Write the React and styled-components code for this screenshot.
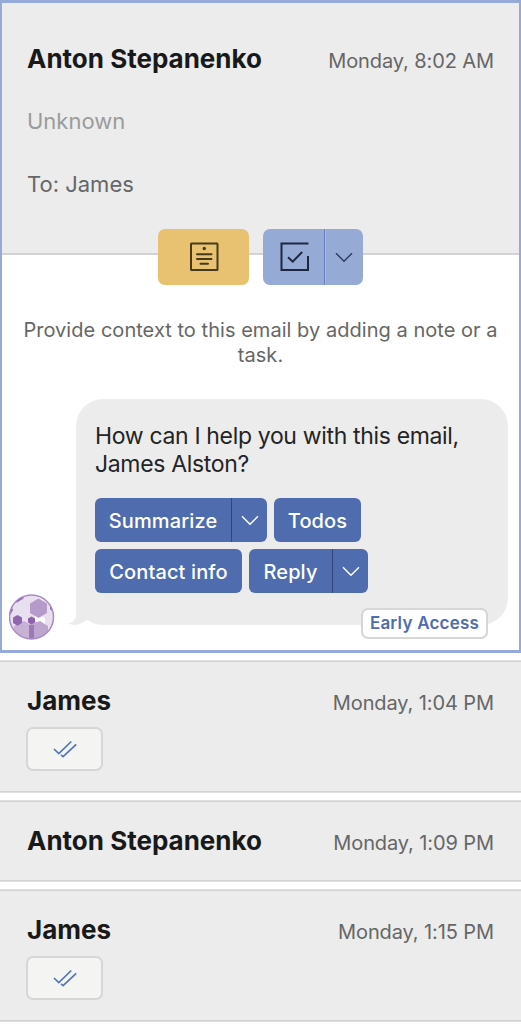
import styled, { createGlobalStyle, css } from 'styled-components';

const messages = [
  { id: 1, name: 'James', date: 'Monday, 1:04 PM', read: true },
  { id: 2, name: 'Anton Stepanenko', date: 'Monday, 1:09 PM', read: false },
  { id: 3, name: 'James', date: 'Monday, 1:15 PM', read: true },
];

export default function App() {
  return (
    <>
      <GlobalStyle />
      <Thread>
        <OpenEmail>
          <EmailHeader>
            <TitleRow>
              <Name>Anton Stepanenko</Name>
              <DateText>Monday, 8:02 AM</DateText>
            </TitleRow>
            <Meta $color='#9b9b9b'>Unknown</Meta>
            <Meta $color='#666666'>To: James</Meta>
          </EmailHeader>
          <Actions>
            <NoteButton aria-label='Add note'>
              <NoteIcon />
            </NoteButton>
            <TaskButton>
              <TaskMain aria-label='Add task'>
                <TaskIcon />
              </TaskMain>
              <TaskToggle aria-label='More task options'>
                <Chevron color='#2b3a5e' />
              </TaskToggle>
            </TaskButton>
          </Actions>
          <Hint>Provide context to this email by adding a note or a task.</Hint>
          <Assistant>
            <Avatar />
            <Bubble>
              <Tail />
              <Question>How can I help you with this email, James Alston?</Question>
              <Prompts>
                <Prompt label='Summarize' width={172} split />
                <Prompt label='Todos' width={87} />
                <Prompt label='Contact info' width={147} />
                <Prompt label='Reply' width={119} split />
              </Prompts>
              <Badge>Early Access</Badge>
            </Bubble>
          </Assistant>
        </OpenEmail>
        {messages.map(({ id, name, date, read }) => (
          <Message key={id} $read={read}>
            <TitleRow>
              <Name>{name}</Name>
              <DateText>{date}</DateText>
            </TitleRow>
            {read && (
              <ReadButton aria-label='Read'>
                <DoubleCheck />
              </ReadButton>
            )}
          </Message>
        ))}
      </Thread>
    </>
  );
}

function Prompt({ label, width, split }) {
  return (
    <PromptButton $width={width}>
      <PromptLabel>{label}</PromptLabel>
      {split && (
        <PromptToggle aria-label={`${label} options`}>
          <Chevron color='#ffffff' />
        </PromptToggle>
      )}
    </PromptButton>
  );
}

function Chevron({ color }) {
  return (
    <svg width='18' height='11' viewBox='0 0 18 11' fill='none'>
      <path d='M1 1.2 9 9.2 17 1.2' stroke={color} strokeWidth='1.4' />
    </svg>
  );
}

function NoteIcon() {
  return (
    <svg width='30' height='30' viewBox='0 0 30 30' fill='none' stroke='#463a1d' strokeWidth='2'>
      <rect x='2' y='1.500' width='26.500' height='26.500' rx='0.500' />
      <path d='M8 12.200H22.500M8 17H22.500M11.500 21.800H19' strokeLinecap='round' />
      <circle cx='15.300' cy='6.500' r='1.700' fill='#463a1d' stroke='none' />
    </svg>
  );
}

function TaskIcon() {
  return (
    <svg width='30' height='30' viewBox='0 0 30 30' fill='none' stroke='#1d2740' strokeWidth='2'>
      <path d='M28.500 1.500H1.500V28H28V14' />
      <path d='M8 15.300 12.700 19.700 22.200 10' />
    </svg>
  );
}

function DoubleCheck() {
  return (
    <svg width='24' height='18' viewBox='0 0 24 18' fill='none' stroke='#5375b9' strokeWidth='1.700'>
      <path d='M1 9 5.800 13.600 18.300 1.500' />
      <path d='M8 14.800 10.100 16.600 23.200 4.300' />
    </svg>
  );
}

function Avatar() {
  return (
    <svg width='46' height='46' viewBox='0 0 46 46'>
      <clipPath id='avatar'>
        <circle cx='22.500' cy='23' r='22' />
      </clipPath>
      <g clipPath='url(#avatar)'>
        <rect width='46' height='46' fill='#e8e0ee' />
        <path d='M28 0H35V46H28Z' fill='#ece6f1' />
        <path d='M26 21 36 24V30L26 27Z' fill='#ffffff' />
        <path d='M5 32 15 27 24 32V46H5Z' fill='#c7b1d5' />
        <path d='M20 31 31 27 39 32V46H20Z' fill='#bea5cf' />
        <path d='M29.500 4.500 38 9.500V19L29.500 24 21 19V9.500Z' fill='#b59aca' />
        <path d='M8.500 21 13 23.500V29L8.500 31.700 4 29V23.500Z' fill='#9067ad' />
        <path d='M22.500 22.500 26 24.500V28.500L22.500 30.500 19 28.500V24.500Z' fill='#8d61ae' />
        <path d='M20 31H25V46H20Z' fill='#9e78b7' />
        <path d='M6 8 13 2 15 4 8 8.500Z M0 14H3L4 16 1 21H0Z M41 11H46V20L41 15Z' fill='#8c5fa8' />
      </g>
      <circle cx='22.500' cy='23' r='22' fill='none' stroke='#a98bc7' strokeWidth='1.500' />
    </svg>
  );
}

function Tail() {
  return (
    <TailSvg width='30' height='32' viewBox='0 0 30 32'>
      <path d='M8 0V23C7.500 27.500 4 29.500 0.500 30.500C2.500 32 9 32.500 13 30.500C16 29 17.500 28 19.500 26.300L26 10V0Z' fill='#ececec' />
    </TailSvg>
  );
}

const GlobalStyle = createGlobalStyle`
  * {
    box-sizing: border-box;
  }

  body {
    margin: 0;
    background: #ffffff;
    font-family: Inter, 'Liberation Sans', sans-serif;
  }

  svg {
    display: block;
    flex-shrink: 0;
  }
`;

const buttonReset = css`
  display: flex;
  align-items: center;
  justify-content: center;
  padding: 0;
  border: 0;
  background: none;
  font-family: inherit;
`;

const Thread = styled.main`
  display: flex;
  flex-direction: column;
  gap: 7px;
  width: 521px;
  height: 1024px;
  overflow: hidden;
`;

const OpenEmail = styled.article`
  flex-shrink: 0;
  height: 653px;
  border: 2px solid #95aad8;
  border-width: 3px 2px;
`;

const EmailHeader = styled.header`
  height: 252px;
  padding: 38px 25px 0;
  background: #ececec;
  border-bottom: 2px solid #d3d3d3;
`;

const TitleRow = styled.div`
  display: flex;
  align-items: center;
  justify-content: space-between;
  height: 34px;
`;

const Name = styled.h2`
  margin: 0;
  color: #19191a;
  font-size: 26px;
  font-weight: 700;
  white-space: nowrap;
`;

const DateText = styled.time`
  padding-top: 6px;
  color: #666666;
  font-size: 20px;
  letter-spacing: -0.1px;
  white-space: nowrap;
`;

const Meta = styled.p`
  margin: 30px 0 0;
  color: ${({ $color }) => $color};
  font-size: 22px;
  line-height: 32px;

  & + & {
    margin-top: 31px;
  }
`;

const Actions = styled.div`
  position: relative;
  display: flex;
  justify-content: center;
  gap: 14px;
  margin-top: -26px;
`;

const NoteButton = styled.button`
  ${buttonReset}
  width: 91px;
  height: 56px;
  background: #e8c271;
  border-radius: 7px;
`;

const TaskButton = styled.div`
  display: flex;
  width: 100px;
  height: 56px;
  background: #96aad6;
  border-radius: 7px;
`;

const TaskMain = styled.button`
  ${buttonReset}
  width: 62px;
  padding-left: 3px;
  border-right: 1px solid #6482be;
`;

const TaskToggle = styled.button`
  ${buttonReset}
  flex: 1;
  padding-right: 1px;
  border-left: 1px solid #a9b9de;
`;

const Hint = styled.p`
  margin: 33px 0 0;
  color: #666666;
  font-size: 20px;
  line-height: 25px;
  letter-spacing: 0.04px;
  text-align: center;
`;

const Assistant = styled.section`
  display: flex;
  align-items: flex-end;
  gap: 21px;
  margin: 31px 11px 0 7px;
`;

const Bubble = styled.div`
  position: relative;
  flex: 1;
  height: 226px;
  margin-bottom: 15px;
  padding: 23px 20px 0 19px;
  background: #ececec;
  border-radius: 27px;
`;

const TailSvg = styled.svg`
  position: absolute;
  left: -8px;
  bottom: 0;
`;

const Question = styled.p`
  margin: 0;
  color: #242424;
  font-size: 23px;
  line-height: 28px;
  letter-spacing: -0.34px;
`;

const Prompts = styled.div`
  display: flex;
  flex-wrap: wrap;
  gap: 7px;
  width: 290px;
  margin-top: 20px;
`;

const PromptButton = styled.div`
  display: flex;
  width: ${({ $width }) => $width}px;
  height: 44px;
  background: #4e6cae;
  border-radius: 6px;
`;

const PromptLabel = styled.button`
  ${buttonReset}
  flex: 1;
  padding-top: 1px;
  color: #ffffff;
  font-size: 20px;
  font-weight: 500;
  letter-spacing: 0.12px;
  white-space: nowrap;
`;

const PromptToggle = styled.button`
  ${buttonReset}
  width: 36px;
  border-left: 1px solid #2f4778;
`;

const Badge = styled.span`
  position: absolute;
  right: 20px;
  bottom: -14px;
  display: flex;
  align-items: center;
  justify-content: center;
  width: 127px;
  height: 31px;
  padding-bottom: 1px;
  color: #4e6cae;
  background: #ffffff;
  border: 2px solid #d6d6d6;
  border-radius: 7px;
  font-size: 17px;
  font-weight: 600;
  letter-spacing: 0.22px;
  white-space: nowrap;
`;

const Message = styled.article`
  flex-shrink: 0;
  height: ${({ $read }) => ($read ? 133 : 82)}px;
  padding: 22px 27px 0;
  background: #ececec;
  border: 0 solid #e0e0e0;
  border-width: 1px 0;
  box-shadow: inset 0 1px #d2d2d2, inset 0 -1px #d2d2d2;
`;

const ReadButton = styled.button`
  ${buttonReset}
  width: 77px;
  height: 44px;
  margin: 10px 0 0 -1px;
  background: #f4f4f3;
  border: 2px solid #d6d6d6;
  border-radius: 7px;
`;
